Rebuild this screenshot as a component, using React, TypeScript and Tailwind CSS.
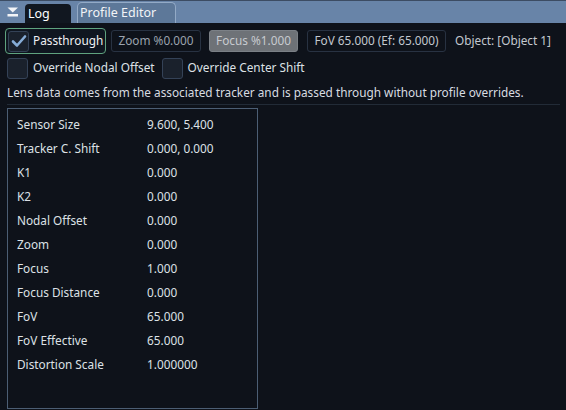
import { useState } from "react";

type Row = { label: string; value: string };

const rows: Row[] = [
  { label: "Sensor Size", value: "9.600, 5.400" },
  { label: "Tracker C. Shift", value: "0.000, 0.000" },
  { label: "K1", value: "0.000" },
  { label: "K2", value: "0.000" },
  { label: "Nodal Offset", value: "0.000" },
  { label: "Zoom", value: "0.000" },
  { label: "Focus", value: "1.000" },
  { label: "Focus Distance", value: "0.000" },
  { label: "FoV", value: "65.000" },
  { label: "FoV Effective", value: "65.000" },
  { label: "Distortion Scale", value: "1.000000" },
];

const CheckBox = ({ checked }: { checked: boolean }) => (
  <span className="w-[21px] h-[21px] rounded-[3px] border border-[#344257] bg-[#1a212c] flex items-center justify-center shrink-0">
    {checked && (
      <svg width="16" height="14" viewBox="0 0 16 14">
        <path d="M2 7.5 L6 11.5 L14 2.5" fill="none" stroke="#86acd6" strokeWidth="2.6" strokeLinecap="round" strokeLinejoin="round" />
      </svg>
    )}
  </span>
);

const App = () => {
  const [passthrough, setPassthrough] = useState(true);
  const [nodal, setNodal] = useState(false);
  const [center, setCenter] = useState(false);

  return (
    <div className="w-[566px] h-[410px] bg-[#0e121a] text-[#dde1e6] text-[11.8px] whitespace-nowrap overflow-hidden" style={{ fontFamily: '"Noto Sans", sans-serif' }}>
      {/* tab strip */}
      <div className="h-[23px] bg-[#6884a8] border-t border-[#3c4c63] flex items-end pl-[7px] text-[12.5px]">
        <svg width="12" height="10" viewBox="0 0 12 10" className="mb-[6px] mr-[6px]">
          <path d="M0.5 0.5 H11 L5.75 5.5 Z" fill="#f2f4f7" />
          <rect x="0.5" y="7" width="10.5" height="2.5" fill="#f2f4f7" />
        </svg>
        <div className="h-[19px] w-[46px] bg-[#111720] rounded-t-[4px] px-[3px] text-white leading-[19px]">Log</div>
        <div className="h-[21px] w-[99px] ml-[6px] bg-[#5d7899] border border-b-0 border-[#93aac6] rounded-t-[5px] px-[2px] text-[#f2f4f7] leading-[19px]">
          Profile Editor
        </div>
      </div>

      <div className="px-[5px] pt-[5px]">
        {/* mode controls */}
        <div className="flex items-center h-[26px]">
          <button
            onClick={() => setPassthrough(!passthrough)}
            className="h-[26px] w-[101px] flex items-center gap-[4px] px-[2px] border border-[#5fa37f] rounded-[4px] bg-[#0f1620]"
          >
            <CheckBox checked={passthrough} />
            <span className="text-[#eef0f3]">Passthrough</span>
          </button>
          <span className="ml-[5px] h-[22px] w-[90px] flex items-center justify-center border border-[#283242] rounded-[3px] text-[#9ba3ae]">Zoom %0.000</span>
          <span className="ml-[8px] h-[22px] w-[89px] flex items-center justify-center bg-[#6e7277] border border-[#7b8086] rounded-[3px] text-[#c7cacf]">Focus %1.000</span>
          <span className="ml-[9px] h-[22px] w-[139px] flex items-center justify-center border border-[#283242] rounded-[3px] text-[#c3c8cf]">FoV 65.000 (Ef: 65.000)</span>
          <span className="ml-[9px] text-[#c3c8cf]">Object: [Object 1]</span>
        </div>

        {/* override toggles */}
        <div className="flex items-center h-[24px] mt-[2px] pl-[2px]">
          <button onClick={() => setNodal(!nodal)} className="flex items-center gap-[5px]">
            <CheckBox checked={nodal} />
            <span>Override Nodal Offset</span>
          </button>
          <button onClick={() => setCenter(!center)} className="flex items-center gap-[5px] ml-[7px]">
            <CheckBox checked={center} />
            <span>Override Center Shift</span>
          </button>
        </div>

        <div className="pl-[2px] mt-[2px] h-[20px] leading-[20px] text-[#d8dce1]">
          Lens data comes from the associated tracker and is passed through without profile overrides.
        </div>
        <div className="ml-[2px] mr-[1px] mt-[2px] h-px bg-[#222b37]" />

        {/* lens data table */}
        <div className="ml-[2px] mt-[3px] w-[251px] h-[301px] border border-[#4c5e74] pt-[4px] pl-[9px]">
          {rows.map((r) => (
            <div key={r.label} className="flex h-[24px] items-center">
              <span className="w-[130px]">{r.label}</span>
              <span>{r.value}</span>
            </div>
          ))}
        </div>
      </div>
    </div>
  );
};

export default App;
